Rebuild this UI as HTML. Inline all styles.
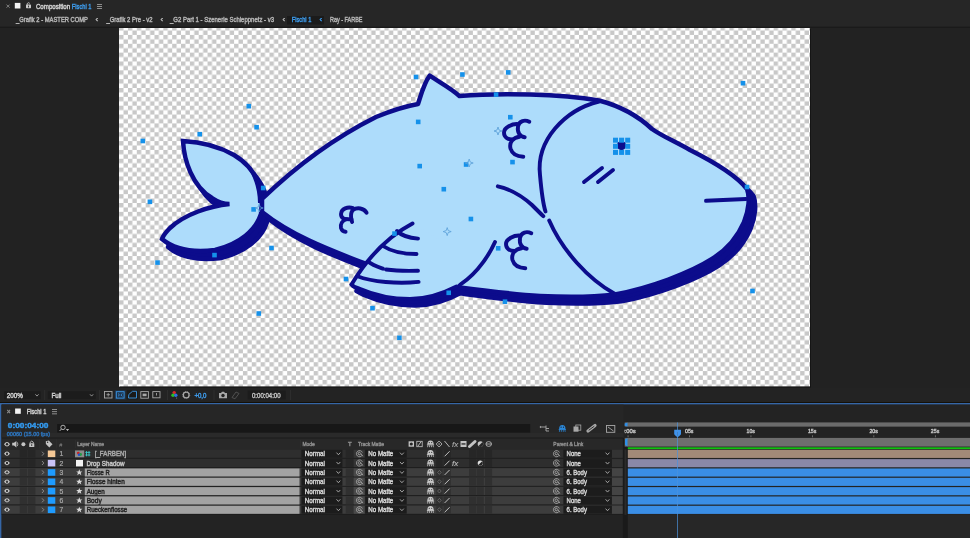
<!DOCTYPE html><html><head><meta charset="utf-8"><style>*{margin:0;padding:0}html,body{width:970px;height:538px;overflow:hidden;background:#232323}svg{display:block;will-change:transform;font-family:"Liberation Sans",sans-serif}</style></head><body>
<svg width="970" height="538" viewBox="0 0 970 538">
<defs>
<pattern id="chk" patternUnits="userSpaceOnUse" x="119.1" y="26.1" width="8.845" height="8.845"><rect width="8.845" height="8.845" fill="#ffffff"/><rect width="4.4225" height="4.4225" fill="#c8c8c8"/><rect x="4.4225" y="4.4225" width="4.4225" height="4.4225" fill="#c8c8c8"/></pattern>
<clipPath id="rclip"><rect x="624.2" y="426" width="20" height="12"/></clipPath>
</defs>
<rect x="0" y="0" width="970" height="538" fill="#232323"/>
<rect x="0" y="0" width="970" height="26" fill="#262626"/>
<rect x="0" y="27" width="970" height="361" fill="#222222"/>
<rect x="0" y="26.8" width="970" height="1.2" fill="#1a1a1a"/>
<rect x="119" y="28" width="691" height="358.6" fill="url(#chk)"/>
<rect x="810" y="29" width="1" height="358" fill="#151515"/>
<rect x="120" y="386.6" width="691" height="1" fill="#151515"/>
<rect x="0" y="388" width="970" height="15" fill="#232323"/>
<rect x="0" y="402" width="970" height="1" fill="#141008"/>
<g fill="#0c0c8c" stroke="#0c0c8c" stroke-width="4.5" stroke-linejoin="round">
<path transform="translate(6,8)" d="M 262,203 C 262,185 254,167 234,155 C 220,147 202,142 183,141 C 184,160 192,186 212,198 C 218,202 224,204 229.5,204 C 210,206 185,214 170,228 C 166,232 163,236 162,239 C 175,250 195,252.5 215,250 C 240,244 256,230 261,214 Z"/>
<path transform="translate(6.5,6.8)" d="M 262,199 C 290,172 330,140 376,117 C 393,110 407,106 418,104 C 421,95 424,83 429.7,75.7 C 441,83 452,89 459.5,96.1 C 500,92.5 560,94 599,100.5 C 620,106 636,114 652,129 C 662,136 672,140 690,150 C 712,161 736,175 747,189 C 750,197 749,210 744,222 C 738,236 727.4,249.2 712,259 C 690,273 650,288 615,294.5 C 590,297.5 560,297 540,296 C 510,294 480,290 457,287 C 420,282 392,275 366,264 C 330,250 292,236 262,212 Z"/>
<path transform="translate(5,6.5)" d="M 351.5,284.5 C 365,262 385,238 412.5,223.5 L 440,240 L 470,270 L 456.5,286 C 442,294 428,299 410,299 C 390,299 374,295 359,288.5 Z"/>
</g>
<path d="M 262,203 C 262,185 254,167 234,155 C 220,147 202,142 183,141 C 184,160 192,186 212,198 C 218,202 224,204 229.5,204 C 210,206 185,214 170,228 C 166,232 163,236 162,239 C 175,250 195,252.5 215,250 C 240,244 256,230 261,214 Z" fill="#addcfb" stroke="#0c0c8c" stroke-width="4.5" stroke-linejoin="miter" stroke-miterlimit="8"/>
<path d="M 249,170 C 257,178 262,188 263,203 L 258,203 C 258,190 254,178 249,170 Z" fill="#0c0c8c"/>
<path d="M 262,199 C 290,172 330,140 376,117 C 393,110 407,106 418,104 C 421,95 424,83 429.7,75.7 C 441,83 452,89 459.5,96.1 C 500,92.5 560,94 599,100.5 C 620,106 636,114 652,129 C 662,136 672,140 690,150 C 712,161 736,175 747,189 C 750,197 749,210 744,222 C 738,236 727.4,249.2 712,259 C 690,273 650,288 615,294.5 C 590,297.5 560,297 540,296 C 510,294 480,290 457,287 C 420,282 392,275 366,264 C 330,250 292,236 262,212 Z" fill="#addcfb" stroke="#0c0c8c" stroke-width="4.5" stroke-linejoin="round"/>
<path d="M 599,101.5 C 565,110 536,140 540,175 C 541.5,192 543,204 545.5,211.5" fill="none" stroke="#0c0c8c" stroke-width="3.9" stroke-linecap="round"/>
<path d="M 549.2,220.5 C 562,250 588,279 615,294" fill="none" stroke="#0c0c8c" stroke-width="3.9" stroke-linecap="round"/>
<path d="M 497.8,186.3 C 510,189 522,196 532,205 C 537,210 540,213 543.3,216.2" fill="none" stroke="#0c0c8c" stroke-width="3.9" stroke-linecap="round"/>
<path d="M 495,242 C 486,262 471,279 456,287" fill="none" stroke="#0c0c8c" stroke-width="3.9" stroke-linecap="round"/>
<path d="M 584,182 L 602,168" fill="none" stroke="#0c0c8c" stroke-width="3.9" stroke-linecap="round"/>
<path d="M 598,182 L 613,170" fill="none" stroke="#0c0c8c" stroke-width="3.9" stroke-linecap="round"/>
<path d="M 706,200.8 L 746,199" fill="none" stroke="#0c0c8c" stroke-width="3.9" stroke-linecap="round"/>
<circle cx="621.5" cy="145.6" r="4.6" fill="#0c0c8c"/>
<g transform="translate(503,119.5)" fill="none" stroke="#0c0c8c" stroke-width="3.9" stroke-linecap="round">
<path d="M 26.3,2.3 C 22,0 16,1 15,7 C 14,13 17,17 21.7,17.7"/>
<path d="M 15.2,4.6 C 9,4 1,8 1,13 C 1,18 5,20 9.6,20"/>
<path d="M 16.6,17.2 C 10,18 6,23 7.5,29 C 9,34 14,37 20.3,37.2"/>
</g>
<g transform="translate(505,231)" fill="none" stroke="#0c0c8c" stroke-width="3.9" stroke-linecap="round">
<path d="M 26.3,2.3 C 22,0 16,1 15,7 C 14,13 17,17 21.7,17.7"/>
<path d="M 15.2,4.6 C 9,4 1,8 1,13 C 1,18 5,20 9.6,20"/>
<path d="M 16.6,17.2 C 10,18 6,23 7.5,29 C 9,34 14,37 20.3,37.2"/>
</g>
<g transform="translate(340,207)" fill="none" stroke="#0c0c8c" stroke-width="3.9" stroke-linecap="round">
<path d="M 26.6,5.7 C 24,1 17,0 13,3 C 10.5,5 10.5,11 12.1,14.9"/>
<path d="M 13,1.2 C 8,-0.6 1.2,1.5 1,7 C 0.9,11.5 4.5,12.6 11.5,12.2"/>
<path d="M 6.5,12.2 C 2,13.5 0.3,17.5 1,21 C 1.6,23 3.5,24.6 5.6,24.8"/>
</g>
<path d="M 351.5,284.5 C 365,262 385,238 412.5,223.5 L 440,240 L 470,270 L 456.5,286 C 442,294 428,299 410,299 C 390,299 374,295 359,288.5 Z" fill="#addcfb" stroke="none"/>
<path d="M 412.5,223.5 C 385,238 365,262 351.5,284.5 C 353,286.5 356,288 359,288.5 C 374,295 390,299 410,299 C 428,299 442,294 456.5,286.5" fill="none" stroke="#0c0c8c" stroke-width="3.9" stroke-linecap="round" stroke-width="4.2"/>
<path d="M 397,231 C 402,236 410,238 418,238.6" fill="none" stroke="#0c0c8c" stroke-width="3.9" stroke-linecap="round"/>
<path d="M 383,246 C 392,252 405,254 416.5,254" fill="none" stroke="#0c0c8c" stroke-width="3.9" stroke-linecap="round"/>
<path d="M 368,261.5 C 372,265 378,267 383,268.7" fill="none" stroke="#0c0c8c" stroke-width="3.9" stroke-linecap="round"/>
<path d="M 386,269.5 C 397,271 408,271 418,270.7" fill="none" stroke="#0c0c8c" stroke-width="3.9" stroke-linecap="round"/>
<path d="M 357.5,276.3 C 372,282 398,284 418.6,281.9" fill="none" stroke="#0c0c8c" stroke-width="3.9" stroke-linecap="round"/>
<rect x="140.5" y="138.7" width="4.6" height="4.6" fill="#1591ea"/>
<rect x="197.4" y="131.9" width="4.6" height="4.6" fill="#1591ea"/>
<rect x="246.5" y="103.9" width="4.6" height="4.6" fill="#1591ea"/>
<rect x="254.3" y="124.9" width="4.6" height="4.6" fill="#1591ea"/>
<rect x="147.6" y="199.5" width="4.6" height="4.6" fill="#1591ea"/>
<rect x="260.9" y="185.7" width="4.6" height="4.6" fill="#1591ea"/>
<rect x="251.3" y="207.1" width="4.6" height="4.6" fill="#1591ea"/>
<rect x="155.2" y="260.3" width="4.6" height="4.6" fill="#1591ea"/>
<rect x="212.2" y="252.8" width="4.6" height="4.6" fill="#1591ea"/>
<rect x="269.2" y="245.7" width="4.6" height="4.6" fill="#1591ea"/>
<rect x="392.2" y="231.3" width="4.6" height="4.6" fill="#1591ea"/>
<rect x="343.7" y="276.7" width="4.6" height="4.6" fill="#1591ea"/>
<rect x="370.2" y="305.9" width="4.6" height="4.6" fill="#1591ea"/>
<rect x="256.5" y="311.2" width="4.6" height="4.6" fill="#1591ea"/>
<rect x="413.7" y="74.7" width="4.6" height="4.6" fill="#1591ea"/>
<rect x="460.1" y="72.2" width="4.6" height="4.6" fill="#1591ea"/>
<rect x="505.9" y="70.1" width="4.6" height="4.6" fill="#1591ea"/>
<rect x="493.8" y="92.3" width="4.6" height="4.6" fill="#1591ea"/>
<rect x="415.9" y="119.6" width="4.6" height="4.6" fill="#1591ea"/>
<rect x="508.0" y="114.9" width="4.6" height="4.6" fill="#1591ea"/>
<rect x="417.4" y="163.8" width="4.6" height="4.6" fill="#1591ea"/>
<rect x="510.2" y="159.8" width="4.6" height="4.6" fill="#1591ea"/>
<rect x="463.8" y="162.2" width="4.6" height="4.6" fill="#1591ea"/>
<rect x="441.5" y="186.9" width="4.6" height="4.6" fill="#1591ea"/>
<rect x="740.7" y="80.9" width="4.6" height="4.6" fill="#1591ea"/>
<rect x="744.7" y="184.7" width="4.6" height="4.6" fill="#1591ea"/>
<rect x="750.2" y="288.7" width="4.6" height="4.6" fill="#1591ea"/>
<rect x="468.6" y="216.7" width="4.6" height="4.6" fill="#1591ea"/>
<rect x="495.9" y="246.0" width="4.6" height="4.6" fill="#1591ea"/>
<rect x="446.4" y="290.5" width="4.6" height="4.6" fill="#1591ea"/>
<rect x="502.7" y="299.4" width="4.6" height="4.6" fill="#1591ea"/>
<rect x="397.1" y="335.5" width="4.6" height="4.6" fill="#1591ea"/>
<rect x="613.0" y="137.7" width="5" height="5" fill="#1591ea"/>
<rect x="613.0" y="143.8" width="5" height="5" fill="#1591ea"/>
<rect x="613.0" y="149.9" width="5" height="5" fill="#1591ea"/>
<rect x="619.1" y="137.7" width="5" height="5" fill="#1591ea"/>
<rect x="619.1" y="149.9" width="5" height="5" fill="#1591ea"/>
<rect x="625.2" y="137.7" width="5" height="5" fill="#1591ea"/>
<rect x="625.2" y="143.8" width="5" height="5" fill="#1591ea"/>
<rect x="625.2" y="149.9" width="5" height="5" fill="#1591ea"/>
<path d="M 259.2,204 L 260.2,207 L 263.2,208 L 260.2,209 L 259.2,212 L 258.2,209 L 255.2,208 L 258.2,207 Z" fill="none" stroke="#5a9fd8" stroke-width="0.8"/>
<path d="M 498,127 L 499,130 L 502,131 L 499,132 L 498,135 L 497,132 L 494,131 L 497,130 Z" fill="none" stroke="#5a9fd8" stroke-width="0.8"/>
<path d="M 469.2,159 L 470.2,162 L 473.2,163 L 470.2,164 L 469.2,167 L 468.2,164 L 465.2,163 L 468.2,162 Z" fill="none" stroke="#5a9fd8" stroke-width="0.8"/>
<path d="M 447.2,227.6 L 448.2,230.6 L 451.2,231.6 L 448.2,232.6 L 447.2,235.6 L 446.2,232.6 L 443.2,231.6 L 446.2,230.6 Z" fill="none" stroke="#5a9fd8" stroke-width="0.8"/>
<path d="M 6.5,4.6 L 9.6,7.7 M 9.6,4.6 L 6.5,7.7" stroke="#8a8a8a" stroke-width="0.9"/>
<rect x="14.8" y="2.9" width="5.6" height="5.6" fill="#f4f4f4"/>
<rect x="26" y="4.6" width="5" height="3.6" rx="0.6" fill="#c8c8c8"/><path d="M 27.2,4.8 L 27.2,3.6 Q 28.5,1.9 29.8,3.4" fill="none" stroke="#c8c8c8" stroke-width="0.9"/><rect x="28.1" y="5.6" width="0.9" height="1.8" fill="#262626"/>
<text x="35.9" y="9" font-size="7.4" fill="#d0d0d0" font-weight="normal" text-anchor="start" textLength="34.2" lengthAdjust="spacingAndGlyphs" stroke="#d0d0d0" stroke-width="0.45">Composition</text>
<text x="71.8" y="9" font-size="7.4" fill="#3d98e6" font-weight="normal" text-anchor="start" textLength="19.7" lengthAdjust="spacingAndGlyphs" stroke="#3d98e6" stroke-width="0.45">Fischi 1</text>
<rect x="97" y="4" width="5" height="0.9" fill="#9a9a9a"/>
<rect x="97" y="6" width="5" height="0.9" fill="#9a9a9a"/>
<rect x="97" y="8" width="5" height="0.9" fill="#9a9a9a"/>
<text x="16" y="22.3" font-size="7" fill="#b3b3b3" font-weight="normal" text-anchor="start" textLength="72" lengthAdjust="spacingAndGlyphs" stroke="#b3b3b3" stroke-width="0.45">_Grafik 2 - MASTER COMP</text>
<text x="95.5" y="22.3" font-size="8" fill="#b3b3b3" font-weight="normal" text-anchor="start" stroke="#b3b3b3" stroke-width="0.45">‹</text>
<text x="106.5" y="22.3" font-size="7" fill="#b3b3b3" font-weight="normal" text-anchor="start" textLength="46" lengthAdjust="spacingAndGlyphs" stroke="#b3b3b3" stroke-width="0.45">_Grafik 2 Pre - v2</text>
<text x="160.5" y="22.3" font-size="8" fill="#b3b3b3" font-weight="normal" text-anchor="start" stroke="#b3b3b3" stroke-width="0.45">‹</text>
<text x="170" y="22.3" font-size="7" fill="#b3b3b3" font-weight="normal" text-anchor="start" textLength="104" lengthAdjust="spacingAndGlyphs" stroke="#b3b3b3" stroke-width="0.45">_G2 Part 1 - Szenerie Schleppnetz - v3</text>
<text x="282.5" y="22.3" font-size="8" fill="#b3b3b3" font-weight="normal" text-anchor="start" stroke="#b3b3b3" stroke-width="0.45">‹</text>
<rect x="287" y="16" width="37" height="8.5" fill="#1b1b1b"/>
<text x="291.8" y="22.3" font-size="7" fill="#3d98e6" font-weight="normal" text-anchor="start" textLength="19.5" lengthAdjust="spacingAndGlyphs" stroke="#3d98e6" stroke-width="0.45">Fischi 1</text>
<text x="319.5" y="22.3" font-size="8" fill="#3d98e6" font-weight="normal" text-anchor="start" stroke="#3d98e6" stroke-width="0.45">‹</text>
<text x="330" y="22.3" font-size="7" fill="#b3b3b3" font-weight="normal" text-anchor="start" textLength="32.5" lengthAdjust="spacingAndGlyphs" stroke="#b3b3b3" stroke-width="0.45">Ray - FARBE</text>
<rect x="4.2" y="391.3" width="36.4" height="7.8" fill="#1c1c1c"/>
<text x="6.8" y="398" font-size="7" fill="#cfcfcf" font-weight="normal" text-anchor="start" textLength="16" lengthAdjust="spacingAndGlyphs" stroke="#cfcfcf" stroke-width="0.45">200%</text>
<path d="M 35.4,394.3 L 37,396.09999999999997 L 38.6,394.3" fill="none" stroke="#b0b0b0" stroke-width="0.8"/>
<rect x="44.3" y="390" width="0.8" height="10" fill="#303030"/>
<rect x="47.9" y="391.3" width="47.8" height="7.8" fill="#1c1c1c"/>
<text x="51.5" y="398" font-size="7" fill="#cfcfcf" font-weight="normal" text-anchor="start" textLength="10" lengthAdjust="spacingAndGlyphs" stroke="#cfcfcf" stroke-width="0.45">Full</text>
<path d="M 90.0,394.3 L 91.6,396.09999999999997 L 93.19999999999999,394.3" fill="none" stroke="#b0b0b0" stroke-width="0.8"/>
<rect x="99" y="390" width="0.8" height="10" fill="#303030"/>
<rect x="104.5" y="391.5" width="7.5" height="6.5" fill="none" stroke="#a8a8a8" stroke-width="0.9"/>
<path d="M 106.5,394.7 L 110,394.7 M 108.2,393 L 108.2,396.5" stroke="#a8a8a8" stroke-width="0.8"/>
<rect x="114.8" y="390.3" width="10.8" height="9.2" fill="#1e3550"/>
<rect x="116.3" y="391.7" width="7.8" height="6.4" fill="none" stroke="#3d98e6" stroke-width="0.9"/>
<path d="M 118,393.5 L 119.5,394.9 L 118,396.3 M 122.4,393.5 L 120.9,394.9 L 122.4,396.3" fill="none" stroke="#3d98e6" stroke-width="0.8"/>
<rect x="127" y="390.3" width="10.8" height="9.2" fill="#1a1a1a"/>
<path d="M 128.5,398 L 128.8,394.5 L 132.5,391.3 L 136.5,391.3 L 136.5,398 Z" fill="none" stroke="#3d98e6" stroke-width="0.9"/>
<rect x="140.8" y="391.6" width="7.6" height="6.6" fill="none" stroke="#a8a8a8" stroke-width="0.9"/>
<rect x="142.6" y="393.6" width="4" height="2.6" fill="#a8a8a8"/>
<rect x="152.8" y="391.6" width="7.2" height="6.2" fill="none" stroke="#a8a8a8" stroke-width="0.9"/>
<rect x="156" y="393" width="0.9" height="2.5" fill="#a8a8a8"/>
<rect x="167" y="390" width="0.8" height="10" fill="#303030"/>
<circle cx="174.2" cy="392.6" r="1.7" fill="#e02828"/><circle cx="173" cy="395.2" r="1.7" fill="#28c028"/><circle cx="175.8" cy="395.3" r="1.7" fill="#3070e0"/><circle cx="176.6" cy="398" r="0.6" fill="#888"/>
<circle cx="186.2" cy="395" r="2.9" fill="none" stroke="#a8a8a8" stroke-width="1.3"/><circle cx="186.2" cy="395" r="3.6" fill="none" stroke="#a8a8a8" stroke-width="0.7" stroke-dasharray="0.9 1.3"/>
<text x="194.4" y="398" font-size="7" fill="#3d98e6" font-weight="normal" text-anchor="start" textLength="12" lengthAdjust="spacingAndGlyphs" stroke="#3d98e6" stroke-width="0.45">+0,0</text>
<rect x="213.6" y="390" width="0.8" height="10" fill="#303030"/>
<path d="M 219,393 L 221,393 L 222,391.8 L 224,391.8 L 225,393 L 227,393 L 227,398.3 L 219,398.3 Z" fill="#a8a8a8"/><circle cx="223" cy="395.5" r="1.7" fill="#232323"/>
<path d="M 232,397.5 L 236,392 L 239,393.5 L 235,398.8 Z" fill="none" stroke="#555" stroke-width="0.9"/>
<rect x="247.6" y="390.5" width="38" height="9" fill="#1c1c1c"/>
<text x="252" y="398" font-size="7" fill="#bdbdbd" font-weight="normal" text-anchor="start" textLength="28.6" lengthAdjust="spacingAndGlyphs" stroke="#bdbdbd" stroke-width="0.45">0:00:04:00</text>
<rect x="290" y="390" width="0.8" height="10" fill="#303030"/>
<rect x="0" y="403" width="970" height="1.6" fill="#3566a6"/>
<rect x="0" y="403" width="1.6" height="135" fill="#3566a6"/>
<rect x="1.6" y="404.6" width="970" height="133.4" fill="#232323"/>
<rect x="1.6" y="404.6" width="622" height="33" fill="#262626"/>
<rect x="1.6" y="432.8" width="622" height="4.8" fill="#2a2a2a"/>
<text x="6.8" y="414" font-size="6.5" fill="#8a8a8a" font-weight="normal" text-anchor="start" stroke="#8a8a8a" stroke-width="0.45">×</text>
<rect x="15.1" y="408.5" width="5.7" height="5.3" fill="#f2f2f2"/>
<text x="26.8" y="414" font-size="6.6" fill="#cccccc" font-weight="normal" text-anchor="start" textLength="19.5" lengthAdjust="spacingAndGlyphs" stroke="#cccccc" stroke-width="0.45">Fischi 1</text>
<rect x="52" y="409" width="5" height="0.9" fill="#9a9a9a"/>
<rect x="52" y="411.2" width="5" height="0.9" fill="#9a9a9a"/>
<rect x="52" y="413.4" width="5" height="0.9" fill="#9a9a9a"/>
<text x="7.8" y="428.4" font-size="8" fill="#3399ee" font-weight="bold" text-anchor="start" textLength="40.6" lengthAdjust="spacingAndGlyphs" stroke="#3399ee" stroke-width="0.45">0:00:04:00</text>
<text x="6.8" y="436" font-size="5.6" fill="#2c6fb3" font-weight="normal" text-anchor="start" textLength="43.2" lengthAdjust="spacingAndGlyphs" stroke="#2c6fb3" stroke-width="0.45">00060 (15.00 fps)</text>
<rect x="57.2" y="424" width="473" height="8.6" fill="#171717"/>
<circle cx="63" cy="427.4" r="2.2" fill="none" stroke="#bbb" stroke-width="0.9"/><path d="M 61.4,429 L 59.6,431 M 66.5,429.5 L 68.5,429.5 L 67.5,430.6 Z" stroke="#bbb" stroke-width="0.9" fill="#bbb"/>
<path d="M 540.5,427 L 546,427 M 546,425.5 L 546,431 M 546,428.5 L 549,428.5 M 546,431 L 549,431" stroke="#a8a8a8" stroke-width="0.9" fill="none"/><path d="M 541,425.8 L 541,428.2 L 539.5,427 Z" fill="#a8a8a8"/>
<path d="M 559.0999999999999,429.2 Q 559.0999999999999,425.0 562.3,425.0 Q 565.5,425.0 565.5,429.2 Z" fill="#2a88da"/>
<rect x="558.6999999999999" y="429.0" width="7.2" height="0.9" fill="#2a88da"/>
<path d="M 559.6999999999999,429.9 L 559.4,431.79999999999995 M 561.4,429.9 L 561.3,431.79999999999995 M 563.1999999999999,429.9 L 563.3,431.79999999999995 M 564.9,429.9 L 565.1999999999999,431.79999999999995" stroke="#2a88da" stroke-width="0.8"/>
<circle cx="561.0999999999999" cy="427.2" r="0.6" fill="#232323"/><circle cx="563.5" cy="427.2" r="0.6" fill="#232323"/>
<rect x="573.5" y="426.5" width="5" height="5.2" fill="#a8a8a8"/><rect x="575.8" y="425" width="5" height="5.2" fill="none" stroke="#a8a8a8" stroke-width="0.8"/>
<path d="M 588,431 L 595,425.5" stroke="#a8a8a8" stroke-width="3.2" stroke-linecap="round"/><path d="M 588.7,430.3 L 594.3,426.2" stroke="#232323" stroke-width="0.9"/>
<rect x="606.5" y="425.5" width="8.3" height="6.8" fill="none" stroke="#a8a8a8" stroke-width="0.9"/><path d="M 608,427 L 613.5,431" stroke="#a8a8a8" stroke-width="0.9"/>
<rect x="1.6" y="437.6" width="621.4" height="1" fill="#1c1c1c"/>
<rect x="1.6" y="438.6" width="621.4" height="10.6" fill="#282828"/>
<path d="M 4,444.2 Q 7,439.8 10,444.2 Q 7,448.6 4,444.2 Z" fill="#c4c4c4"/><circle cx="7" cy="444.2" r="1.2" fill="#282828"/>
<path d="M 12.2,442.8 L 14,442.8 L 16.4,440.9 L 16.4,447.5 L 14,445.6 L 12.2,445.6 Z" fill="#c4c4c4"/><path d="M 17.3,442.3 Q 18.4,444.2 17.3,446.1" fill="none" stroke="#c4c4c4" stroke-width="0.8"/>
<circle cx="23.4" cy="444.2" r="2" fill="#c4c4c4"/>
<rect x="29.2" y="443.3" width="5.1" height="3.6" rx="0.5" fill="#c4c4c4"/><path d="M 30.2,443.4 L 30.2,442.2 Q 31.75,439.9 33.3,442.2 L 33.3,443.4" fill="none" stroke="#c4c4c4" stroke-width="0.9"/><rect x="31.3" y="444.2" width="0.9" height="1.8" fill="#282828"/>
<rect x="39.3" y="439.5" width="0.6" height="9" fill="#303030"/>
<path d="M 45.8,441.3 L 48.8,440.6 L 52.5,444.3 L 49.3,447.4 L 45.9,444 Z" fill="#c4c4c4"/><circle cx="47.6" cy="442.3" r="0.7" fill="#282828"/>
<rect x="56.5" y="439.5" width="0.6" height="9" fill="#303030"/>
<text x="59.2" y="446.6" font-size="5.5" fill="#8c8c8c" font-weight="normal" text-anchor="start">#</text>
<rect x="75.2" y="440" width="0.8" height="8" fill="#2f2f2f"/>
<text x="77.3" y="446.3" font-size="6" fill="#8c8c8c" font-weight="normal" text-anchor="start" textLength="26.7" lengthAdjust="spacingAndGlyphs" stroke="#8c8c8c" stroke-width="0.45">Layer Name</text>
<rect x="300.2" y="440" width="0.8" height="8" fill="#2f2f2f"/>
<text x="302.4" y="446.3" font-size="6" fill="#8c8c8c" font-weight="normal" text-anchor="start" textLength="12.5" lengthAdjust="spacingAndGlyphs" stroke="#8c8c8c" stroke-width="0.45">Mode</text>
<text x="348" y="446.3" font-size="6" fill="#8c8c8c" font-weight="normal" text-anchor="start" stroke="#8c8c8c" stroke-width="0.45">T</text>
<text x="357.9" y="446.3" font-size="6" fill="#8c8c8c" font-weight="normal" text-anchor="start" textLength="26" lengthAdjust="spacingAndGlyphs" stroke="#8c8c8c" stroke-width="0.45">Track Matte</text>
<rect x="408.6" y="441.3" width="5.4" height="5.4" fill="#c4c4c4"/><circle cx="411.3" cy="444" r="1.6" fill="#262626"/>
<rect x="416.8" y="441.3" width="5.4" height="5.4" fill="none" stroke="#c4c4c4" stroke-width="0.8"/><path d="M 418,446 L 421,441.8" stroke="#c4c4c4" stroke-width="0.9"/>
<path d="M 427.3,444.6 Q 427.3,440.40000000000003 430.5,440.40000000000003 Q 433.7,440.40000000000003 433.7,444.6 Z" fill="#c4c4c4"/>
<rect x="426.9" y="444.40000000000003" width="7.2" height="0.9" fill="#c4c4c4"/>
<path d="M 427.9,445.3 L 427.6,447.2 M 429.6,445.3 L 429.5,447.2 M 431.4,445.3 L 431.5,447.2 M 433.1,445.3 L 433.4,447.2" stroke="#c4c4c4" stroke-width="0.8"/>
<circle cx="429.3" cy="442.6" r="0.6" fill="#282828"/><circle cx="431.7" cy="442.6" r="0.6" fill="#282828"/>
<path d="M 439.1,441 L 442,444 L 439.1,447 L 436.2,444 Z" fill="none" stroke="#c4c4c4" stroke-width="0.8"/><circle cx="439.1" cy="444" r="0.7" fill="#c4c4c4"/>
<path d="M 444.5,441 L 449.5,447" stroke="#c4c4c4" stroke-width="0.9"/>
<text x="452" y="446.9" font-size="8" fill="#b0b0b0" font-weight="normal" text-anchor="start" stroke="#b0b0b0" stroke-width="0.1" font-style="italic">fx</text>
<rect x="460.5" y="441" width="6" height="6" fill="#c4c4c4"/><rect x="461.5" y="443.3" width="4" height="1.3" fill="#262626"/>
<path d="M 469.5,446.5 L 475,441.5" stroke="#c4c4c4" stroke-width="3" stroke-linecap="round"/>
<circle cx="480.5" cy="444" r="2.8" fill="#c4c4c4"/><path d="M 480.5,441.2 A 2.8,2.8 0 0 1 480.5,446.8 Z" fill="#262626" transform="rotate(45 480.5 444)"/>
<ellipse cx="488.7" cy="444" rx="2.8" ry="2.4" fill="none" stroke="#c4c4c4" stroke-width="0.8"/><path d="M 486,444 L 491.4,444" stroke="#c4c4c4" stroke-width="0.8"/>
<text x="553.3" y="446.3" font-size="6" fill="#8c8c8c" font-weight="normal" text-anchor="start" textLength="30" lengthAdjust="spacingAndGlyphs" stroke="#8c8c8c" stroke-width="0.45">Parent &amp; Link</text>
<rect x="1.6" y="449.5" width="621.4" height="8.43" fill="#2e2e2e"/>
<rect x="1.6" y="457.93" width="621.4" height="0.9" fill="#1d1d1d"/>
<path d="M 4.1,453.7 Q 7,449.4 9.9,453.7 Q 7,458.0 4.1,453.7 Z" fill="#cfcfcf"/><circle cx="7" cy="453.7" r="1.2" fill="#2e2e2e"/>
<rect x="19.8" y="449.9" width="7.4" height="7.53" fill="#262626"/>
<rect x="28" y="449.9" width="7.4" height="7.53" fill="#262626"/>
<path d="M 42,451.7 L 43.8,453.7 L 42,455.7" fill="none" stroke="#9a9a9a" stroke-width="0.8"/>
<rect x="47.8" y="450.5" width="7.5" height="6.6" fill="#f5c896"/>
<text x="59.5" y="456.2" font-size="6.8" fill="#a8a8a8" font-weight="normal" text-anchor="start" stroke="#a8a8a8" stroke-width="0.2">1</text>
<rect x="75" y="450.4" width="9.2" height="6.9" fill="#8c8c8c"/>
<circle cx="78.3" cy="453.09999999999997" r="1.4" fill="#d02020"/><circle cx="80.6" cy="454.5" r="1.4" fill="#20a040"/><circle cx="79" cy="454.7" r="1.2" fill="#2050d0"/>
<path d="M 86.5,451.09999999999997 L 86.5,456.3 M 89,451.09999999999997 L 89,456.3 M 85.3,452.4 L 90.3,452.4 M 85.3,455.0 L 90.3,455.0" stroke="#3cc8c8" stroke-width="0.9"/>
<text x="94.7" y="456.2" font-size="7" fill="#a8a8a8" font-weight="normal" text-anchor="start" textLength="31.6" lengthAdjust="spacingAndGlyphs" stroke="#a8a8a8" stroke-width="0.45">[_FARBEN]</text>
<rect x="301.4" y="449.8" width="41" height="7.93" fill="#1c1c1c"/>
<text x="304.8" y="456.2" font-size="7" fill="#d0d0d0" font-weight="normal" text-anchor="start" textLength="20.2" lengthAdjust="spacingAndGlyphs" stroke="#d0d0d0" stroke-width="0.45">Normal</text>
<path d="M 336.5,452.65 L 338.4,454.75 L 340.29999999999995,452.65" fill="none" stroke="#b0b0b0" stroke-width="0.9"/>
<rect x="345.8" y="449.8" width="7.4" height="7.93" fill="#262626"/>
<rect x="354" y="449.8" width="10.5" height="7.93" fill="#353535"/>
<path d="M 362.2,455.3 A 3.1,3.1 0 1 1 362.4,452.5 M 360.6,453.9 A 1.3,1.3 0 1 1 360.2,452.59999999999997 L 362.8,456.3" fill="none" stroke="#b5b5b5" stroke-width="0.75"/>
<rect x="365.1" y="449.8" width="41.6" height="7.93" fill="#1c1c1c"/>
<text x="368.3" y="456.2" font-size="7" fill="#d0d0d0" font-weight="normal" text-anchor="start" textLength="25" lengthAdjust="spacingAndGlyphs" stroke="#d0d0d0" stroke-width="0.45">No Matte</text>
<path d="M 400.0,452.65 L 401.9,454.75 L 403.79999999999995,452.65" fill="none" stroke="#b0b0b0" stroke-width="0.9"/>
<path d="M 427.3,454.3 Q 427.3,450.1 430.5,450.1 Q 433.7,450.1 433.7,454.3 Z" fill="#c8c8c8"/>
<rect x="426.9" y="454.1" width="7.2" height="0.9" fill="#c8c8c8"/>
<path d="M 427.9,455.0 L 427.6,456.9 M 429.6,455.0 L 429.5,456.9 M 431.4,455.0 L 431.5,456.9 M 433.1,455.0 L 433.4,456.9" stroke="#c8c8c8" stroke-width="0.8"/>
<circle cx="429.3" cy="452.3" r="0.6" fill="#2e2e2e"/><circle cx="431.7" cy="452.3" r="0.6" fill="#2e2e2e"/>
<rect x="436.3" y="449.8" width="6.3" height="7.93" fill="#262626"/>
<rect x="443.7" y="449.8" width="7.1" height="7.93" fill="#262626"/>
<path d="M 444.6,456.3 L 449.6,451.3" stroke="#d0d0d0" stroke-width="0.9"/>
<rect x="469" y="449.8" width="7.1" height="7.93" fill="#262626"/>
<rect x="476.7" y="449.8" width="7.1" height="7.93" fill="#262626"/>
<rect x="485" y="449.8" width="7.1" height="7.93" fill="#262626"/>
<path d="M 559.2,455.3 A 3.1,3.1 0 1 1 559.4,452.5 M 557.6,453.9 A 1.3,1.3 0 1 1 557.2,452.59999999999997 L 559.8,456.3" fill="none" stroke="#b5b5b5" stroke-width="0.75"/>
<rect x="563.4" y="449.8" width="48.5" height="7.93" fill="#1c1c1c"/>
<text x="566.6" y="456.2" font-size="7" fill="#d0d0d0" font-weight="normal" text-anchor="start" textLength="14.3" lengthAdjust="spacingAndGlyphs" stroke="#d0d0d0" stroke-width="0.45">None</text>
<path d="M 605.6,452.65 L 607.5,454.75 L 609.4,452.65" fill="none" stroke="#b0b0b0" stroke-width="0.9"/>
<rect x="612" y="449.8" width="10.8" height="7.93" fill="#333333"/>
<rect x="1.6" y="458.83" width="621.4" height="8.43" fill="#2e2e2e"/>
<rect x="1.6" y="467.26" width="621.4" height="0.9" fill="#1d1d1d"/>
<path d="M 4.1,463.03 Q 7,458.72999999999996 9.9,463.03 Q 7,467.33 4.1,463.03 Z" fill="#cfcfcf"/><circle cx="7" cy="463.03" r="1.2" fill="#2e2e2e"/>
<rect x="19.8" y="459.22999999999996" width="7.4" height="7.53" fill="#262626"/>
<rect x="28" y="459.22999999999996" width="7.4" height="7.53" fill="#262626"/>
<path d="M 42,461.03 L 43.8,463.03 L 42,465.03" fill="none" stroke="#9a9a9a" stroke-width="0.8"/>
<rect x="47.8" y="459.83" width="7.5" height="6.6" fill="#c9c2f6"/>
<text x="59.5" y="465.53" font-size="6.8" fill="#a8a8a8" font-weight="normal" text-anchor="start" stroke="#a8a8a8" stroke-width="0.2">2</text>
<rect x="76" y="459.93" width="7" height="6.5" fill="#f4f4f4"/>
<text x="86.5" y="465.53" font-size="7" fill="#c4c4c4" font-weight="normal" text-anchor="start" textLength="38" lengthAdjust="spacingAndGlyphs" stroke="#c4c4c4" stroke-width="0.45">Drop Shadow</text>
<rect x="301.4" y="459.13" width="41" height="7.93" fill="#1c1c1c"/>
<text x="304.8" y="465.53" font-size="7" fill="#d0d0d0" font-weight="normal" text-anchor="start" textLength="20.2" lengthAdjust="spacingAndGlyphs" stroke="#d0d0d0" stroke-width="0.45">Normal</text>
<path d="M 336.5,461.97999999999996 L 338.4,464.08 L 340.29999999999995,461.97999999999996" fill="none" stroke="#b0b0b0" stroke-width="0.9"/>
<rect x="345.8" y="459.13" width="7.4" height="7.93" fill="#262626"/>
<rect x="354" y="459.13" width="10.5" height="7.93" fill="#353535"/>
<path d="M 362.2,464.63 A 3.1,3.1 0 1 1 362.4,461.83 M 360.6,463.22999999999996 A 1.3,1.3 0 1 1 360.2,461.92999999999995 L 362.8,465.63" fill="none" stroke="#b5b5b5" stroke-width="0.75"/>
<rect x="365.1" y="459.13" width="41.6" height="7.93" fill="#1c1c1c"/>
<text x="368.3" y="465.53" font-size="7" fill="#d0d0d0" font-weight="normal" text-anchor="start" textLength="25" lengthAdjust="spacingAndGlyphs" stroke="#d0d0d0" stroke-width="0.45">No Matte</text>
<path d="M 400.0,461.97999999999996 L 401.9,464.08 L 403.79999999999995,461.97999999999996" fill="none" stroke="#b0b0b0" stroke-width="0.9"/>
<path d="M 427.3,463.63 Q 427.3,459.43 430.5,459.43 Q 433.7,459.43 433.7,463.63 Z" fill="#c8c8c8"/>
<rect x="426.9" y="463.43" width="7.2" height="0.9" fill="#c8c8c8"/>
<path d="M 427.9,464.33 L 427.6,466.22999999999996 M 429.6,464.33 L 429.5,466.22999999999996 M 431.4,464.33 L 431.5,466.22999999999996 M 433.1,464.33 L 433.4,466.22999999999996" stroke="#c8c8c8" stroke-width="0.8"/>
<circle cx="429.3" cy="461.63" r="0.6" fill="#2e2e2e"/><circle cx="431.7" cy="461.63" r="0.6" fill="#2e2e2e"/>
<rect x="436.3" y="459.13" width="6.3" height="7.93" fill="#262626"/>
<rect x="443.7" y="459.13" width="7.1" height="7.93" fill="#262626"/>
<path d="M 444.6,465.63 L 449.6,460.63" stroke="#d0d0d0" stroke-width="0.9"/>
<text x="452" y="465.92999999999995" font-size="8" fill="#c0c0c0" font-weight="normal" text-anchor="start" stroke="#c0c0c0" stroke-width="0.1" font-style="italic">fx</text>
<rect x="469" y="459.13" width="7.1" height="7.93" fill="#262626"/>
<rect x="476.7" y="459.13" width="7.1" height="7.93" fill="#262626"/>
<rect x="485" y="459.13" width="7.1" height="7.93" fill="#262626"/>
<circle cx="480.3" cy="463.03" r="2.6" fill="#e0e0e0"/><path d="M 480.3,460.42999999999995 A 2.6,2.6 0 0 1 480.3,465.63 Z" fill="#222" transform="rotate(45 480.3 463.03)"/>
<path d="M 559.2,464.63 A 3.1,3.1 0 1 1 559.4,461.83 M 557.6,463.22999999999996 A 1.3,1.3 0 1 1 557.2,461.92999999999995 L 559.8,465.63" fill="none" stroke="#b5b5b5" stroke-width="0.75"/>
<rect x="563.4" y="459.13" width="48.5" height="7.93" fill="#1c1c1c"/>
<text x="566.6" y="465.53" font-size="7" fill="#d0d0d0" font-weight="normal" text-anchor="start" textLength="14.3" lengthAdjust="spacingAndGlyphs" stroke="#d0d0d0" stroke-width="0.45">None</text>
<path d="M 605.6,461.97999999999996 L 607.5,464.08 L 609.4,461.97999999999996" fill="none" stroke="#b0b0b0" stroke-width="0.9"/>
<rect x="612" y="459.13" width="10.8" height="7.93" fill="#333333"/>
<rect x="1.6" y="468.16" width="621.4" height="8.43" fill="#3d3d3d"/>
<rect x="1.6" y="476.59000000000003" width="621.4" height="0.9" fill="#1d1d1d"/>
<path d="M 4.1,472.36 Q 7,468.06 9.9,472.36 Q 7,476.66 4.1,472.36 Z" fill="#cfcfcf"/><circle cx="7" cy="472.36" r="1.2" fill="#3d3d3d"/>
<rect x="19.8" y="468.56" width="7.4" height="7.53" fill="#303030"/>
<rect x="28" y="468.56" width="7.4" height="7.53" fill="#303030"/>
<path d="M 42,470.36 L 43.8,472.36 L 42,474.36" fill="none" stroke="#9a9a9a" stroke-width="0.8"/>
<rect x="47.8" y="469.16" width="7.5" height="6.6" fill="#1e9bff"/>
<text x="59.5" y="474.86" font-size="6.8" fill="#a8a8a8" font-weight="normal" text-anchor="start" stroke="#a8a8a8" stroke-width="0.2">3</text>
<rect x="84.8" y="468.46000000000004" width="214.7" height="8.03" fill="#a3a3a3"/>
<path d="M 79.3,469.36 L 80.2,471.46000000000004 L 82.4,471.46000000000004 L 80.7,472.86 L 81.3,475.16 L 79.3,473.76 L 77.3,475.16 L 77.9,472.86 L 76.2,471.46000000000004 L 78.4,471.46000000000004 Z" fill="#d8d8d8"/>
<text x="86.7" y="474.86" font-size="7" fill="#262626" font-weight="normal" text-anchor="start" textLength="23" lengthAdjust="spacingAndGlyphs" stroke="#262626" stroke-width="0.45">Flosse R</text>
<rect x="301.4" y="468.46000000000004" width="41" height="7.93" fill="#1c1c1c"/>
<text x="304.8" y="474.86" font-size="7" fill="#d0d0d0" font-weight="normal" text-anchor="start" textLength="20.2" lengthAdjust="spacingAndGlyphs" stroke="#d0d0d0" stroke-width="0.45">Normal</text>
<path d="M 336.5,471.31 L 338.4,473.41 L 340.29999999999995,471.31" fill="none" stroke="#b0b0b0" stroke-width="0.9"/>
<rect x="345.8" y="468.46000000000004" width="7.4" height="7.93" fill="#303030"/>
<rect x="354" y="468.46000000000004" width="10.5" height="7.93" fill="#494949"/>
<path d="M 362.2,473.96000000000004 A 3.1,3.1 0 1 1 362.4,471.16 M 360.6,472.56 A 1.3,1.3 0 1 1 360.2,471.26 L 362.8,474.96000000000004" fill="none" stroke="#b5b5b5" stroke-width="0.75"/>
<rect x="365.1" y="468.46000000000004" width="41.6" height="7.93" fill="#1c1c1c"/>
<text x="368.3" y="474.86" font-size="7" fill="#d0d0d0" font-weight="normal" text-anchor="start" textLength="25" lengthAdjust="spacingAndGlyphs" stroke="#d0d0d0" stroke-width="0.45">No Matte</text>
<path d="M 400.0,471.31 L 401.9,473.41 L 403.79999999999995,471.31" fill="none" stroke="#b0b0b0" stroke-width="0.9"/>
<path d="M 427.3,472.96000000000004 Q 427.3,468.76000000000005 430.5,468.76000000000005 Q 433.7,468.76000000000005 433.7,472.96000000000004 Z" fill="#c8c8c8"/>
<rect x="426.9" y="472.76000000000005" width="7.2" height="0.9" fill="#c8c8c8"/>
<path d="M 427.9,473.66 L 427.6,475.56 M 429.6,473.66 L 429.5,475.56 M 431.4,473.66 L 431.5,475.56 M 433.1,473.66 L 433.4,475.56" stroke="#c8c8c8" stroke-width="0.8"/>
<circle cx="429.3" cy="470.96000000000004" r="0.6" fill="#3d3d3d"/><circle cx="431.7" cy="470.96000000000004" r="0.6" fill="#3d3d3d"/>
<rect x="436.3" y="468.46000000000004" width="6.3" height="7.93" fill="#303030"/>
<path d="M 439.4,470.36 L 441.2,472.36 L 439.4,474.36 L 437.6,472.36 Z" fill="none" stroke="#777" stroke-width="0.7"/>
<rect x="443.7" y="468.46000000000004" width="7.1" height="7.93" fill="#303030"/>
<path d="M 444.6,474.96000000000004 L 449.6,469.96000000000004" stroke="#d0d0d0" stroke-width="0.9"/>
<rect x="469" y="468.46000000000004" width="7.1" height="7.93" fill="#303030"/>
<rect x="476.7" y="468.46000000000004" width="7.1" height="7.93" fill="#303030"/>
<rect x="485" y="468.46000000000004" width="7.1" height="7.93" fill="#303030"/>
<path d="M 559.2,473.96000000000004 A 3.1,3.1 0 1 1 559.4,471.16 M 557.6,472.56 A 1.3,1.3 0 1 1 557.2,471.26 L 559.8,474.96000000000004" fill="none" stroke="#b5b5b5" stroke-width="0.75"/>
<rect x="563.4" y="468.46000000000004" width="48.5" height="7.93" fill="#1c1c1c"/>
<text x="566.6" y="474.86" font-size="7" fill="#d0d0d0" font-weight="normal" text-anchor="start" textLength="20.3" lengthAdjust="spacingAndGlyphs" stroke="#d0d0d0" stroke-width="0.45">6. Body</text>
<path d="M 605.6,471.31 L 607.5,473.41 L 609.4,471.31" fill="none" stroke="#b0b0b0" stroke-width="0.9"/>
<rect x="612" y="468.46000000000004" width="10.8" height="7.93" fill="#444444"/>
<rect x="1.6" y="477.49" width="621.4" height="8.43" fill="#3d3d3d"/>
<rect x="1.6" y="485.92" width="621.4" height="0.9" fill="#1d1d1d"/>
<path d="M 4.1,481.69 Q 7,477.39 9.9,481.69 Q 7,485.99 4.1,481.69 Z" fill="#cfcfcf"/><circle cx="7" cy="481.69" r="1.2" fill="#3d3d3d"/>
<rect x="19.8" y="477.89" width="7.4" height="7.53" fill="#303030"/>
<rect x="28" y="477.89" width="7.4" height="7.53" fill="#303030"/>
<path d="M 42,479.69 L 43.8,481.69 L 42,483.69" fill="none" stroke="#9a9a9a" stroke-width="0.8"/>
<rect x="47.8" y="478.49" width="7.5" height="6.6" fill="#1e9bff"/>
<text x="59.5" y="484.19" font-size="6.8" fill="#a8a8a8" font-weight="normal" text-anchor="start" stroke="#a8a8a8" stroke-width="0.2">4</text>
<rect x="84.8" y="477.79" width="214.7" height="8.03" fill="#a3a3a3"/>
<path d="M 79.3,478.69 L 80.2,480.79 L 82.4,480.79 L 80.7,482.19 L 81.3,484.49 L 79.3,483.09 L 77.3,484.49 L 77.9,482.19 L 76.2,480.79 L 78.4,480.79 Z" fill="#d8d8d8"/>
<text x="86.7" y="484.19" font-size="7" fill="#262626" font-weight="normal" text-anchor="start" textLength="38" lengthAdjust="spacingAndGlyphs" stroke="#262626" stroke-width="0.45">Flosse hinten</text>
<rect x="301.4" y="477.79" width="41" height="7.93" fill="#1c1c1c"/>
<text x="304.8" y="484.19" font-size="7" fill="#d0d0d0" font-weight="normal" text-anchor="start" textLength="20.2" lengthAdjust="spacingAndGlyphs" stroke="#d0d0d0" stroke-width="0.45">Normal</text>
<path d="M 336.5,480.64 L 338.4,482.74 L 340.29999999999995,480.64" fill="none" stroke="#b0b0b0" stroke-width="0.9"/>
<rect x="345.8" y="477.79" width="7.4" height="7.93" fill="#303030"/>
<rect x="354" y="477.79" width="10.5" height="7.93" fill="#494949"/>
<path d="M 362.2,483.29 A 3.1,3.1 0 1 1 362.4,480.49 M 360.6,481.89 A 1.3,1.3 0 1 1 360.2,480.59 L 362.8,484.29" fill="none" stroke="#b5b5b5" stroke-width="0.75"/>
<rect x="365.1" y="477.79" width="41.6" height="7.93" fill="#1c1c1c"/>
<text x="368.3" y="484.19" font-size="7" fill="#d0d0d0" font-weight="normal" text-anchor="start" textLength="25" lengthAdjust="spacingAndGlyphs" stroke="#d0d0d0" stroke-width="0.45">No Matte</text>
<path d="M 400.0,480.64 L 401.9,482.74 L 403.79999999999995,480.64" fill="none" stroke="#b0b0b0" stroke-width="0.9"/>
<path d="M 427.3,482.29 Q 427.3,478.09000000000003 430.5,478.09000000000003 Q 433.7,478.09000000000003 433.7,482.29 Z" fill="#c8c8c8"/>
<rect x="426.9" y="482.09000000000003" width="7.2" height="0.9" fill="#c8c8c8"/>
<path d="M 427.9,482.99 L 427.6,484.89 M 429.6,482.99 L 429.5,484.89 M 431.4,482.99 L 431.5,484.89 M 433.1,482.99 L 433.4,484.89" stroke="#c8c8c8" stroke-width="0.8"/>
<circle cx="429.3" cy="480.29" r="0.6" fill="#3d3d3d"/><circle cx="431.7" cy="480.29" r="0.6" fill="#3d3d3d"/>
<rect x="436.3" y="477.79" width="6.3" height="7.93" fill="#303030"/>
<path d="M 439.4,479.69 L 441.2,481.69 L 439.4,483.69 L 437.6,481.69 Z" fill="none" stroke="#777" stroke-width="0.7"/>
<rect x="443.7" y="477.79" width="7.1" height="7.93" fill="#303030"/>
<path d="M 444.6,484.29 L 449.6,479.29" stroke="#d0d0d0" stroke-width="0.9"/>
<rect x="469" y="477.79" width="7.1" height="7.93" fill="#303030"/>
<rect x="476.7" y="477.79" width="7.1" height="7.93" fill="#303030"/>
<rect x="485" y="477.79" width="7.1" height="7.93" fill="#303030"/>
<path d="M 559.2,483.29 A 3.1,3.1 0 1 1 559.4,480.49 M 557.6,481.89 A 1.3,1.3 0 1 1 557.2,480.59 L 559.8,484.29" fill="none" stroke="#b5b5b5" stroke-width="0.75"/>
<rect x="563.4" y="477.79" width="48.5" height="7.93" fill="#1c1c1c"/>
<text x="566.6" y="484.19" font-size="7" fill="#d0d0d0" font-weight="normal" text-anchor="start" textLength="20.3" lengthAdjust="spacingAndGlyphs" stroke="#d0d0d0" stroke-width="0.45">6. Body</text>
<path d="M 605.6,480.64 L 607.5,482.74 L 609.4,480.64" fill="none" stroke="#b0b0b0" stroke-width="0.9"/>
<rect x="612" y="477.79" width="10.8" height="7.93" fill="#444444"/>
<rect x="1.6" y="486.82" width="621.4" height="8.43" fill="#3d3d3d"/>
<rect x="1.6" y="495.25" width="621.4" height="0.9" fill="#1d1d1d"/>
<path d="M 4.1,491.02 Q 7,486.71999999999997 9.9,491.02 Q 7,495.32 4.1,491.02 Z" fill="#cfcfcf"/><circle cx="7" cy="491.02" r="1.2" fill="#3d3d3d"/>
<rect x="19.8" y="487.21999999999997" width="7.4" height="7.53" fill="#303030"/>
<rect x="28" y="487.21999999999997" width="7.4" height="7.53" fill="#303030"/>
<path d="M 42,489.02 L 43.8,491.02 L 42,493.02" fill="none" stroke="#9a9a9a" stroke-width="0.8"/>
<rect x="47.8" y="487.82" width="7.5" height="6.6" fill="#1e9bff"/>
<text x="59.5" y="493.52" font-size="6.8" fill="#a8a8a8" font-weight="normal" text-anchor="start" stroke="#a8a8a8" stroke-width="0.2">5</text>
<rect x="84.8" y="487.12" width="214.7" height="8.03" fill="#a3a3a3"/>
<path d="M 79.3,488.02 L 80.2,490.12 L 82.4,490.12 L 80.7,491.52 L 81.3,493.82 L 79.3,492.41999999999996 L 77.3,493.82 L 77.9,491.52 L 76.2,490.12 L 78.4,490.12 Z" fill="#d8d8d8"/>
<text x="86.7" y="493.52" font-size="7" fill="#262626" font-weight="normal" text-anchor="start" textLength="18" lengthAdjust="spacingAndGlyphs" stroke="#262626" stroke-width="0.45">Augen</text>
<rect x="301.4" y="487.12" width="41" height="7.93" fill="#1c1c1c"/>
<text x="304.8" y="493.52" font-size="7" fill="#d0d0d0" font-weight="normal" text-anchor="start" textLength="20.2" lengthAdjust="spacingAndGlyphs" stroke="#d0d0d0" stroke-width="0.45">Normal</text>
<path d="M 336.5,489.96999999999997 L 338.4,492.07 L 340.29999999999995,489.96999999999997" fill="none" stroke="#b0b0b0" stroke-width="0.9"/>
<rect x="345.8" y="487.12" width="7.4" height="7.93" fill="#303030"/>
<rect x="354" y="487.12" width="10.5" height="7.93" fill="#494949"/>
<path d="M 362.2,492.62 A 3.1,3.1 0 1 1 362.4,489.82 M 360.6,491.21999999999997 A 1.3,1.3 0 1 1 360.2,489.91999999999996 L 362.8,493.62" fill="none" stroke="#b5b5b5" stroke-width="0.75"/>
<rect x="365.1" y="487.12" width="41.6" height="7.93" fill="#1c1c1c"/>
<text x="368.3" y="493.52" font-size="7" fill="#d0d0d0" font-weight="normal" text-anchor="start" textLength="25" lengthAdjust="spacingAndGlyphs" stroke="#d0d0d0" stroke-width="0.45">No Matte</text>
<path d="M 400.0,489.96999999999997 L 401.9,492.07 L 403.79999999999995,489.96999999999997" fill="none" stroke="#b0b0b0" stroke-width="0.9"/>
<path d="M 427.3,491.62 Q 427.3,487.42 430.5,487.42 Q 433.7,487.42 433.7,491.62 Z" fill="#c8c8c8"/>
<rect x="426.9" y="491.42" width="7.2" height="0.9" fill="#c8c8c8"/>
<path d="M 427.9,492.32 L 427.6,494.21999999999997 M 429.6,492.32 L 429.5,494.21999999999997 M 431.4,492.32 L 431.5,494.21999999999997 M 433.1,492.32 L 433.4,494.21999999999997" stroke="#c8c8c8" stroke-width="0.8"/>
<circle cx="429.3" cy="489.62" r="0.6" fill="#3d3d3d"/><circle cx="431.7" cy="489.62" r="0.6" fill="#3d3d3d"/>
<rect x="436.3" y="487.12" width="6.3" height="7.93" fill="#303030"/>
<path d="M 439.4,489.02 L 441.2,491.02 L 439.4,493.02 L 437.6,491.02 Z" fill="none" stroke="#777" stroke-width="0.7"/>
<rect x="443.7" y="487.12" width="7.1" height="7.93" fill="#303030"/>
<path d="M 444.6,493.62 L 449.6,488.62" stroke="#d0d0d0" stroke-width="0.9"/>
<rect x="469" y="487.12" width="7.1" height="7.93" fill="#303030"/>
<rect x="476.7" y="487.12" width="7.1" height="7.93" fill="#303030"/>
<rect x="485" y="487.12" width="7.1" height="7.93" fill="#303030"/>
<path d="M 559.2,492.62 A 3.1,3.1 0 1 1 559.4,489.82 M 557.6,491.21999999999997 A 1.3,1.3 0 1 1 557.2,489.91999999999996 L 559.8,493.62" fill="none" stroke="#b5b5b5" stroke-width="0.75"/>
<rect x="563.4" y="487.12" width="48.5" height="7.93" fill="#1c1c1c"/>
<text x="566.6" y="493.52" font-size="7" fill="#d0d0d0" font-weight="normal" text-anchor="start" textLength="20.3" lengthAdjust="spacingAndGlyphs" stroke="#d0d0d0" stroke-width="0.45">6. Body</text>
<path d="M 605.6,489.96999999999997 L 607.5,492.07 L 609.4,489.96999999999997" fill="none" stroke="#b0b0b0" stroke-width="0.9"/>
<rect x="612" y="487.12" width="10.8" height="7.93" fill="#444444"/>
<rect x="1.6" y="496.15" width="621.4" height="8.43" fill="#3d3d3d"/>
<rect x="1.6" y="504.58" width="621.4" height="0.9" fill="#1d1d1d"/>
<path d="M 4.1,500.34999999999997 Q 7,496.04999999999995 9.9,500.34999999999997 Q 7,504.65 4.1,500.34999999999997 Z" fill="#cfcfcf"/><circle cx="7" cy="500.34999999999997" r="1.2" fill="#3d3d3d"/>
<rect x="19.8" y="496.54999999999995" width="7.4" height="7.53" fill="#303030"/>
<rect x="28" y="496.54999999999995" width="7.4" height="7.53" fill="#303030"/>
<path d="M 42,498.34999999999997 L 43.8,500.34999999999997 L 42,502.34999999999997" fill="none" stroke="#9a9a9a" stroke-width="0.8"/>
<rect x="47.8" y="497.15" width="7.5" height="6.6" fill="#1e9bff"/>
<text x="59.5" y="502.84999999999997" font-size="6.8" fill="#a8a8a8" font-weight="normal" text-anchor="start" stroke="#a8a8a8" stroke-width="0.2">6</text>
<rect x="84.8" y="496.45" width="214.7" height="8.03" fill="#a3a3a3"/>
<path d="M 79.3,497.34999999999997 L 80.2,499.45 L 82.4,499.45 L 80.7,500.84999999999997 L 81.3,503.15 L 79.3,501.74999999999994 L 77.3,503.15 L 77.9,500.84999999999997 L 76.2,499.45 L 78.4,499.45 Z" fill="#d8d8d8"/>
<text x="86.7" y="502.84999999999997" font-size="7" fill="#262626" font-weight="normal" text-anchor="start" textLength="15" lengthAdjust="spacingAndGlyphs" stroke="#262626" stroke-width="0.45">Body</text>
<rect x="301.4" y="496.45" width="41" height="7.93" fill="#1c1c1c"/>
<text x="304.8" y="502.84999999999997" font-size="7" fill="#d0d0d0" font-weight="normal" text-anchor="start" textLength="20.2" lengthAdjust="spacingAndGlyphs" stroke="#d0d0d0" stroke-width="0.45">Normal</text>
<path d="M 336.5,499.29999999999995 L 338.4,501.4 L 340.29999999999995,499.29999999999995" fill="none" stroke="#b0b0b0" stroke-width="0.9"/>
<rect x="345.8" y="496.45" width="7.4" height="7.93" fill="#303030"/>
<rect x="354" y="496.45" width="10.5" height="7.93" fill="#494949"/>
<path d="M 362.2,501.95 A 3.1,3.1 0 1 1 362.4,499.15 M 360.6,500.54999999999995 A 1.3,1.3 0 1 1 360.2,499.24999999999994 L 362.8,502.95" fill="none" stroke="#b5b5b5" stroke-width="0.75"/>
<rect x="365.1" y="496.45" width="41.6" height="7.93" fill="#1c1c1c"/>
<text x="368.3" y="502.84999999999997" font-size="7" fill="#d0d0d0" font-weight="normal" text-anchor="start" textLength="25" lengthAdjust="spacingAndGlyphs" stroke="#d0d0d0" stroke-width="0.45">No Matte</text>
<path d="M 400.0,499.29999999999995 L 401.9,501.4 L 403.79999999999995,499.29999999999995" fill="none" stroke="#b0b0b0" stroke-width="0.9"/>
<path d="M 427.3,500.95 Q 427.3,496.75 430.5,496.75 Q 433.7,496.75 433.7,500.95 Z" fill="#c8c8c8"/>
<rect x="426.9" y="500.75" width="7.2" height="0.9" fill="#c8c8c8"/>
<path d="M 427.9,501.65 L 427.6,503.54999999999995 M 429.6,501.65 L 429.5,503.54999999999995 M 431.4,501.65 L 431.5,503.54999999999995 M 433.1,501.65 L 433.4,503.54999999999995" stroke="#c8c8c8" stroke-width="0.8"/>
<circle cx="429.3" cy="498.95" r="0.6" fill="#3d3d3d"/><circle cx="431.7" cy="498.95" r="0.6" fill="#3d3d3d"/>
<rect x="436.3" y="496.45" width="6.3" height="7.93" fill="#303030"/>
<path d="M 439.4,498.34999999999997 L 441.2,500.34999999999997 L 439.4,502.34999999999997 L 437.6,500.34999999999997 Z" fill="none" stroke="#777" stroke-width="0.7"/>
<rect x="443.7" y="496.45" width="7.1" height="7.93" fill="#303030"/>
<path d="M 444.6,502.95 L 449.6,497.95" stroke="#d0d0d0" stroke-width="0.9"/>
<rect x="469" y="496.45" width="7.1" height="7.93" fill="#303030"/>
<rect x="476.7" y="496.45" width="7.1" height="7.93" fill="#303030"/>
<rect x="485" y="496.45" width="7.1" height="7.93" fill="#303030"/>
<path d="M 559.2,501.95 A 3.1,3.1 0 1 1 559.4,499.15 M 557.6,500.54999999999995 A 1.3,1.3 0 1 1 557.2,499.24999999999994 L 559.8,502.95" fill="none" stroke="#b5b5b5" stroke-width="0.75"/>
<rect x="563.4" y="496.45" width="48.5" height="7.93" fill="#1c1c1c"/>
<text x="566.6" y="502.84999999999997" font-size="7" fill="#d0d0d0" font-weight="normal" text-anchor="start" textLength="14.3" lengthAdjust="spacingAndGlyphs" stroke="#d0d0d0" stroke-width="0.45">None</text>
<path d="M 605.6,499.29999999999995 L 607.5,501.4 L 609.4,499.29999999999995" fill="none" stroke="#b0b0b0" stroke-width="0.9"/>
<rect x="612" y="496.45" width="10.8" height="7.93" fill="#444444"/>
<rect x="1.6" y="505.48" width="621.4" height="8.43" fill="#3d3d3d"/>
<rect x="1.6" y="513.9100000000001" width="621.4" height="0.9" fill="#1d1d1d"/>
<path d="M 4.1,509.68 Q 7,505.38 9.9,509.68 Q 7,513.98 4.1,509.68 Z" fill="#cfcfcf"/><circle cx="7" cy="509.68" r="1.2" fill="#3d3d3d"/>
<rect x="19.8" y="505.88" width="7.4" height="7.53" fill="#303030"/>
<rect x="28" y="505.88" width="7.4" height="7.53" fill="#303030"/>
<path d="M 42,507.68 L 43.8,509.68 L 42,511.68" fill="none" stroke="#9a9a9a" stroke-width="0.8"/>
<rect x="47.8" y="506.48" width="7.5" height="6.6" fill="#1e9bff"/>
<text x="59.5" y="512.1800000000001" font-size="6.8" fill="#a8a8a8" font-weight="normal" text-anchor="start" stroke="#a8a8a8" stroke-width="0.2">7</text>
<rect x="84.8" y="505.78000000000003" width="214.7" height="8.03" fill="#a3a3a3"/>
<path d="M 79.3,506.68 L 80.2,508.78000000000003 L 82.4,508.78000000000003 L 80.7,510.18 L 81.3,512.48 L 79.3,511.08 L 77.3,512.48 L 77.9,510.18 L 76.2,508.78000000000003 L 78.4,508.78000000000003 Z" fill="#d8d8d8"/>
<text x="86.7" y="512.1800000000001" font-size="7" fill="#262626" font-weight="normal" text-anchor="start" textLength="40.5" lengthAdjust="spacingAndGlyphs" stroke="#262626" stroke-width="0.45">Rueckenflosse</text>
<rect x="301.4" y="505.78000000000003" width="41" height="7.93" fill="#1c1c1c"/>
<text x="304.8" y="512.1800000000001" font-size="7" fill="#d0d0d0" font-weight="normal" text-anchor="start" textLength="20.2" lengthAdjust="spacingAndGlyphs" stroke="#d0d0d0" stroke-width="0.45">Normal</text>
<path d="M 336.5,508.63 L 338.4,510.73 L 340.29999999999995,508.63" fill="none" stroke="#b0b0b0" stroke-width="0.9"/>
<rect x="345.8" y="505.78000000000003" width="7.4" height="7.93" fill="#303030"/>
<rect x="354" y="505.78000000000003" width="10.5" height="7.93" fill="#494949"/>
<path d="M 362.2,511.28000000000003 A 3.1,3.1 0 1 1 362.4,508.48 M 360.6,509.88 A 1.3,1.3 0 1 1 360.2,508.58 L 362.8,512.28" fill="none" stroke="#b5b5b5" stroke-width="0.75"/>
<rect x="365.1" y="505.78000000000003" width="41.6" height="7.93" fill="#1c1c1c"/>
<text x="368.3" y="512.1800000000001" font-size="7" fill="#d0d0d0" font-weight="normal" text-anchor="start" textLength="25" lengthAdjust="spacingAndGlyphs" stroke="#d0d0d0" stroke-width="0.45">No Matte</text>
<path d="M 400.0,508.63 L 401.9,510.73 L 403.79999999999995,508.63" fill="none" stroke="#b0b0b0" stroke-width="0.9"/>
<path d="M 427.3,510.28000000000003 Q 427.3,506.08000000000004 430.5,506.08000000000004 Q 433.7,506.08000000000004 433.7,510.28000000000003 Z" fill="#c8c8c8"/>
<rect x="426.9" y="510.08000000000004" width="7.2" height="0.9" fill="#c8c8c8"/>
<path d="M 427.9,510.98 L 427.6,512.88 M 429.6,510.98 L 429.5,512.88 M 431.4,510.98 L 431.5,512.88 M 433.1,510.98 L 433.4,512.88" stroke="#c8c8c8" stroke-width="0.8"/>
<circle cx="429.3" cy="508.28000000000003" r="0.6" fill="#3d3d3d"/><circle cx="431.7" cy="508.28000000000003" r="0.6" fill="#3d3d3d"/>
<rect x="436.3" y="505.78000000000003" width="6.3" height="7.93" fill="#303030"/>
<path d="M 439.4,507.68 L 441.2,509.68 L 439.4,511.68 L 437.6,509.68 Z" fill="none" stroke="#777" stroke-width="0.7"/>
<rect x="443.7" y="505.78000000000003" width="7.1" height="7.93" fill="#303030"/>
<path d="M 444.6,512.28 L 449.6,507.28000000000003" stroke="#d0d0d0" stroke-width="0.9"/>
<rect x="469" y="505.78000000000003" width="7.1" height="7.93" fill="#303030"/>
<rect x="476.7" y="505.78000000000003" width="7.1" height="7.93" fill="#303030"/>
<rect x="485" y="505.78000000000003" width="7.1" height="7.93" fill="#303030"/>
<path d="M 559.2,511.28000000000003 A 3.1,3.1 0 1 1 559.4,508.48 M 557.6,509.88 A 1.3,1.3 0 1 1 557.2,508.58 L 559.8,512.28" fill="none" stroke="#b5b5b5" stroke-width="0.75"/>
<rect x="563.4" y="505.78000000000003" width="48.5" height="7.93" fill="#1c1c1c"/>
<text x="566.6" y="512.1800000000001" font-size="7" fill="#d0d0d0" font-weight="normal" text-anchor="start" textLength="20.3" lengthAdjust="spacingAndGlyphs" stroke="#d0d0d0" stroke-width="0.45">6. Body</text>
<path d="M 605.6,508.63 L 607.5,510.73 L 609.4,508.63" fill="none" stroke="#b0b0b0" stroke-width="0.9"/>
<rect x="612" y="505.78000000000003" width="10.8" height="7.93" fill="#444444"/>
<rect x="622.8" y="438.2" width="5" height="100" fill="#1a1a1a"/>
<rect x="624.5" y="449.5" width="2" height="65.3" fill="#2b2b2b"/>
<rect x="627.8" y="514.1" width="343" height="24" fill="#262626"/>
<rect x="624.7" y="422.4" width="346" height="4.4" fill="#6b6b6b"/>
<path d="M 627.5,422.4 L 624.7,423.5 L 624.7,425.7 L 627.5,426.8 Z" fill="#2f8fe8"/>
<rect x="624" y="426.8" width="347" height="10.5" fill="#232323"/>
<rect x="627.7" y="435.3" width="0.7" height="2" fill="#8a8a8a"/>
<text x="621.2" y="433" font-size="5.8" fill="#bdbdbd" font-weight="normal" text-anchor="start" textLength="14.5" lengthAdjust="spacingAndGlyphs" stroke="#bdbdbd" stroke-width="0.45" clip-path="url(#rclip)">0:00s</text>
<rect x="689.1500000000001" y="435.3" width="0.7" height="2" fill="#8a8a8a"/>
<text x="685.0500000000001" y="433" font-size="5.8" fill="#bdbdbd" font-weight="normal" text-anchor="start" textLength="8.4" lengthAdjust="spacingAndGlyphs" stroke="#bdbdbd" stroke-width="0.45">05s</text>
<rect x="750.6" y="435.3" width="0.7" height="2" fill="#8a8a8a"/>
<text x="746.5" y="433" font-size="5.8" fill="#bdbdbd" font-weight="normal" text-anchor="start" textLength="8.4" lengthAdjust="spacingAndGlyphs" stroke="#bdbdbd" stroke-width="0.45">10s</text>
<rect x="812.0500000000001" y="435.3" width="0.7" height="2" fill="#8a8a8a"/>
<text x="807.95" y="433" font-size="5.8" fill="#bdbdbd" font-weight="normal" text-anchor="start" textLength="8.4" lengthAdjust="spacingAndGlyphs" stroke="#bdbdbd" stroke-width="0.45">15s</text>
<rect x="873.5" y="435.3" width="0.7" height="2" fill="#8a8a8a"/>
<text x="869.4" y="433" font-size="5.8" fill="#bdbdbd" font-weight="normal" text-anchor="start" textLength="8.4" lengthAdjust="spacingAndGlyphs" stroke="#bdbdbd" stroke-width="0.45">20s</text>
<rect x="934.95" y="435.3" width="0.7" height="2" fill="#8a8a8a"/>
<text x="930.85" y="433" font-size="5.8" fill="#bdbdbd" font-weight="normal" text-anchor="start" textLength="8.4" lengthAdjust="spacingAndGlyphs" stroke="#bdbdbd" stroke-width="0.45">25s</text>
<rect x="624.7" y="437.9" width="346" height="8.7" fill="#6e6e6e"/>
<path d="M 627.5,437.9 L 625,439.5 L 625,445 L 627.5,446.6 Z" fill="#2f8fe8"/>
<rect x="627.8" y="447.3" width="343" height="1.8" fill="#10c010"/>
<rect x="627.8" y="449.8" width="343" height="8.13" fill="#a28a78"/>
<rect x="627.8" y="459.13" width="343" height="8.13" fill="#8a88a8"/>
<rect x="627.8" y="468.46000000000004" width="343" height="8.13" fill="#3a8ee6"/>
<rect x="627.8" y="477.79" width="343" height="8.13" fill="#3a8ee6"/>
<rect x="627.8" y="487.12" width="343" height="8.13" fill="#3a8ee6"/>
<rect x="627.8" y="496.45" width="343" height="8.13" fill="#3a8ee6"/>
<rect x="627.8" y="505.78000000000003" width="343" height="8.13" fill="#3a8ee6"/>
<rect x="627.8" y="514.8" width="343" height="24" fill="#272727"/>
<path d="M 674.2,429.8 L 681,429.8 L 681,434 Q 681,435 677.6,437.2 Q 674.2,435 674.2,434 Z" fill="#3f92ea"/><rect x="677.3" y="432" width="0.7" height="4" fill="#1d3f66"/>
<rect x="677.3" y="422.4" width="0.7" height="115.6" fill="#4d93dc"/>
</svg></body></html>
